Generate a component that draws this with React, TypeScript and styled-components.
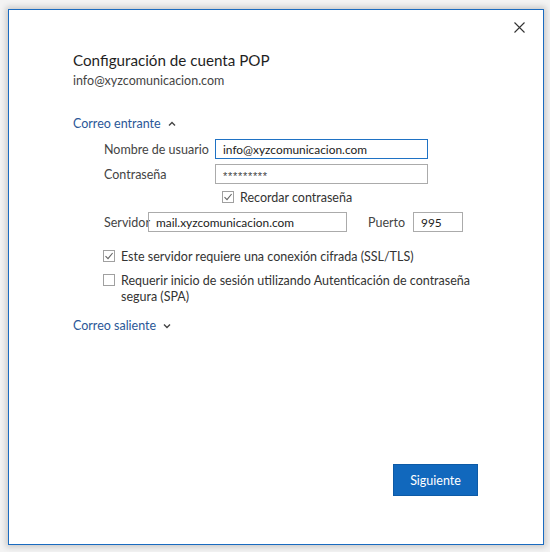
import React from "react";
import styled, { createGlobalStyle } from "styled-components";

const FONT = `Lato, "Segoe UI", sans-serif`;

const Global = createGlobalStyle`
  html, body { margin: 0; padding: 0; background: #f3f3f3; }
  body { width: 550px; height: 552px; overflow: hidden; font-family: ${FONT}; }
`;

const Page = styled.div`
  padding: 9px 0 0 8px;
`;

const Window = styled.div`
  position: relative;
  box-sizing: border-box;
  width: 536px;
  height: 536px;
  background: #fff;
  border: 1px solid #1a6bc0;
  box-shadow: 0 0 6px 2px rgba(0, 0, 0, 0.18);
  padding: 40px 0 0 64px;
  display: flex;
  flex-direction: column;
  color: #333;
`;

const Close = styled.button`
  position: absolute;
  top: 9px;
  right: 16px;
  width: 16px;
  height: 16px;
  border: none;
  background: none;
  padding: 0;
  display: flex;
  align-items: center;
  justify-content: center;
`;

const Title = styled.div`
  font-size: 15.2px;
  color: #1f1f1f;
  line-height: 20px;
`;

const Subtitle = styled.div`
  font-size: 12.5px;
  color: #444;
  line-height: 16px;
  margin-top: 3px;
`;

const SectionLink = styled.div<{ $top: number }>`
  margin-top: ${(p) => p.$top}px;
  font-size: 12.5px;
  color: #2b5797;
  line-height: 16px;
  display: flex;
  align-items: center;
  gap: 7px;
`;

const Section = styled.div`
  padding-left: 31px;
  display: flex;
  flex-direction: column;
`;

const Row = styled.div<{ $top: number }>`
  display: flex;
  align-items: center;
  margin-top: ${(p) => p.$top}px;
  height: 20px;
`;

const Label = styled.div<{ $w: number; $gap?: number }>`
  width: ${(p) => p.$w}px;
  margin-left: ${(p) => p.$gap || 0}px;
  font-size: 12.5px;
  color: #444;
  flex: none;
  white-space: nowrap;
`;

const Input = styled.div<{ $w: number; $focus?: boolean }>`
  box-sizing: border-box;
  width: ${(p) => p.$w}px;
  height: 20px;
  border: 1px solid ${(p) => (p.$focus ? "#1f72c4" : "#ababab")};
  font-size: 11.9px;
  color: #222;
  padding: 0 7px;
  display: flex;
  align-items: center;
  flex: none;
  white-space: nowrap;
`;

const Pw = styled.span`
  font-family: "Liberation Sans", Arial, sans-serif;
  font-size: 11px;
  letter-spacing: 0.7px;
  color: #444;
  position: relative;
  top: 2px;
`;

const Check = styled.div<{ $indent?: number; $top: number }>`
  display: flex;
  align-items: flex-start;
  gap: 6px;
  margin-top: ${(p) => p.$top}px;
  margin-left: ${(p) => p.$indent || 0}px;
  font-size: 12.5px;
  color: #333;
  line-height: 16px;
`;

const Box = styled.div`
  box-sizing: border-box;
  width: 12px;
  height: 12px;
  border: 1px solid #a0a0a0;
  flex: none;
  margin-top: 1px;
  display: flex;
  align-items: center;
  justify-content: center;
  background: #fff;
`;

const CheckText = styled.div`
  width: 360px;
`;

const Footer = styled.div`
  margin-top: auto;
  margin-bottom: 48px;
  margin-right: 65px;
  display: flex;
  justify-content: flex-end;
`;

const Button = styled.button`
  width: 85px;
  height: 32px;
  background: #1168bd;
  border: 1px solid #0d5aa6;
  color: #fff;
  font-size: 12.5px;
  font-family: ${FONT};
  padding: 0;
`;

const Chevron = ({ up }: { up?: boolean }) => (
  <svg width="8" height="6" viewBox="0 0 8 6">
    <path
      d={up ? "M1 4.5 L4 1.5 L7 4.5" : "M1 1.5 L4 4.5 L7 1.5"}
      fill="none"
      stroke="#444"
      strokeWidth="1.4"
    />
  </svg>
);

const Tick = () => (
  <svg width="10" height="10" viewBox="0 0 10 10">
    <path d="M1.5 5.2 L4 7.7 L8.6 2" fill="none" stroke="#666" strokeWidth="1.1" />
  </svg>
);

export default function App() {
  return (
    <>
      <Global />
      <Page>
        <Window>
          <Close aria-label="Cerrar">
            <svg width="11" height="11" viewBox="0 0 11 11">
              <path d="M0.5 0.5 L10.5 10.5 M10.5 0.5 L0.5 10.5" stroke="#333" strokeWidth="1.1" />
            </svg>
          </Close>
          <Title>Configuración de cuenta POP</Title>
          <Subtitle>info@xyzcomunicacion.com</Subtitle>
          <SectionLink $top={27}>
            Correo entrante <Chevron up />
          </SectionLink>
          <Section>
            <Row $top={7}>
              <Label $w={111}>Nombre de usuario</Label>
              <Input $w={213} $focus>info@xyzcomunicacion.com</Input>
            </Row>
            <Row $top={5}>
              <Label $w={111}>Contraseña</Label>
              <Input $w={213}>
                <Pw>*********</Pw>
              </Input>
            </Row>
            <Check $indent={118} $top={6}>
              <Box>
                <Tick />
              </Box>
              Recordar contraseña
            </Check>
            <Row $top={6}>
              <Label $w={44}>Servidor</Label>
              <Input $w={199}>mail.xyzcomunicacion.com</Input>
              <Label $w={45} $gap={21}>
                Puerto
              </Label>
              <Input $w={50}>995</Input>
            </Row>
            <Check $top={17} $indent={-1}>
              <Box>
                <Tick />
              </Box>
              <CheckText>Este servidor requiere una conexión cifrada (SSL/TLS)</CheckText>
            </Check>
            <Check $top={8} $indent={-1}>
              <Box />
              <CheckText>Requerir inicio de sesión utilizando Autenticación de contraseña segura (SPA)</CheckText>
            </Check>
          </Section>
          <SectionLink $top={13}>
            Correo saliente <Chevron />
          </SectionLink>
          <Footer>
            <Button>Siguiente</Button>
          </Footer>
        </Window>
      </Page>
    </>
  );
}
